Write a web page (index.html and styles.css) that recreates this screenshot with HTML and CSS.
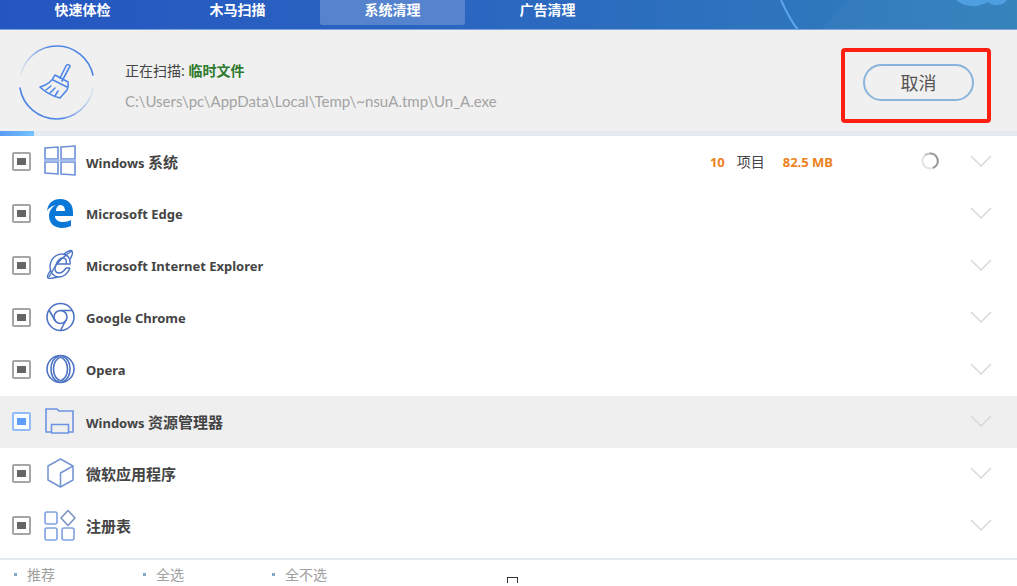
FILE: index.html
```html
<!DOCTYPE html>
<html lang="zh-CN">
<head>
  <meta charset="UTF-8" />
  <meta name="viewport" content="width=device-width, initial-scale=1.0" />
  <title>系统清理</title>
  <link rel="stylesheet" href="styles.css">
</head>
<body>
  <div class="app">
    <nav class="tabs">
      <svg class="tabs-art" viewBox="0 0 317 30" aria-hidden="true">
        <path d="M122 30Q138 8 150 0H317V30Z" fill="#fff" fill-opacity=".03"/>
        <path d="M81 0C86 11 91 22 99 31" fill="none" stroke="#5fa5ee" stroke-width="2"/>
        <path d="M256 0C262 5 270 7 277 6C282 5 286 3 288 2C293 7 303 6 307 0Z" fill="#4f9ee0"/>
      </svg>
      <button class="tab" type="button">快速体检</button>
      <button class="tab" type="button">木马扫描</button>
      <button class="tab active" type="button">系统清理</button>
      <button class="tab" type="button">广告清理</button>
    </nav>

    <header class="scan">
      <svg class="scan-icon" viewBox="0 0 76 76" fill="none" stroke="#4f86e6" stroke-width="1.6" stroke-linejoin="round" stroke-linecap="round" aria-hidden="true">
        <defs>
          <linearGradient id="arcTop" x1="0" x2="1"><stop offset="0" stop-color="#4f86e6" stop-opacity=".1"/><stop offset=".4" stop-color="#4f86e6"/></linearGradient>
          <linearGradient id="arcBottom" x1="1" x2="0"><stop offset="0" stop-color="#4f86e6" stop-opacity=".1"/><stop offset=".45" stop-color="#4f86e6"/></linearGradient>
        </defs>
        <path d="M2 30A37 37 0 0 1 74 31" stroke="url(#arcTop)"/>
        <path d="M1 44A37 37 0 0 0 74 44" stroke="url(#arcBottom)"/>
        <path d="M41 34L47 22Q49 19 51 22Q51 23 50 24L43 37"/>
        <path d="M36 31L49 38Q50 42 48 46L41 54Q29 51 21 43Q32 40 36 31Z"/>
        <path d="M34 36L48 43M27 46L32 42M31 49L36 44M36 52L39 47"/>
      </svg>
      <div class="scan-text">
        <p class="scan-status">正在扫描: <strong>临时文件</strong></p>
        <p class="scan-path">C:\Users\pc\AppData\Local\Temp\~nsuA.tmp\Un_A.exe</p>
      </div>
      <div class="highlight">
        <button class="cancel" type="button">取消</button>
      </div>
    </header>
    <div class="progress"><div class="progress-bar"></div></div>

    <ul class="list">
      <li class="row">
        <label class="item">
          <input type="checkbox" checked>
          <svg class="icon" viewBox="0 0 32 32" fill="none" stroke="#6b8fd8" stroke-width="1.6" aria-hidden="true">
            <path d="M1 3L14 2V14H1ZM17 2L31 1V14H17ZM1 17H14V29L1 28ZM17 17H31V30L17 29Z"/>
            <path d="M0 15.500H32" stroke="#a9c0ee" stroke-width="2"/>
          </svg>
          <span class="name">Windows <span class="cjk">系统</span></span>
        </label>
        <div class="stats"><b>10</b><span>项目</span><b>82.5 MB</b></div>
        <svg class="spinner" viewBox="0 0 18 18" fill="none" stroke-width="2" aria-hidden="true">
          <circle cx="9" cy="9" r="7.500" stroke="#e2e2e2"/>
          <path d="M4 3.500A7.500 7.500 0 0 1 9 1.500" stroke="#c4c4c4"/>
          <path d="M9 1.500A7.500 7.500 0 0 1 12 16" stroke="#969696"/>
        </svg>
        <button class="expand" type="button" aria-label="展开"><svg viewBox="0 0 22 12"><path d="M1 1L11 11L21 1"/></svg></button>
      </li>
      <li class="row">
        <label class="item">
          <input type="checkbox" checked>
          <svg class="icon" viewBox="0 0 32 32" fill="#0a78d7" aria-hidden="true">
            <path d="M3 14C4 6 9 2 16 2C25 2 29 8 29 15V19H11C11 23 15 25 19 25C22 25 25 24 27 23V29C24 30 21 31 18 31C10 31 5 26 5 19C5 14 8 10 12 8C7 9 4 12 3 14ZM12 14H21C21 10 19 8 16 8C14 8 12 11 12 14Z"/>
          </svg>
          <span class="name">Microsoft Edge</span>
        </label>
        <button class="expand" type="button" aria-label="展开"><svg viewBox="0 0 22 12"><path d="M1 1L11 11L21 1"/></svg></button>
      </li>
      <li class="row">
        <label class="item">
          <input type="checkbox" checked>
          <svg class="icon" viewBox="0 0 32 32" fill="none" stroke="#4d74c4" stroke-width="1.4" stroke-linejoin="round" aria-hidden="true">
            <path d="M26 19C24 24 20 28 15 28C10 28 6 24 6 18C6 10 12 5 18 5C23 5 27 9 26 15H13"/>
            <path d="M22 19C20 22 18 24 15 24C11 24 10 20 12 16C13 12 16 9 19 9C22 9 23 12 22 15"/>
            <path d="M22 19H26M20 5C24 2 27 1 28 2C29 4 28 7 26 10M7 21C4 25 3 28 4 29C6 30 10 29 14 28M5 28L12 16Q18 8 28 2"/>
          </svg>
          <span class="name">Microsoft Internet Explorer</span>
        </label>
        <button class="expand" type="button" aria-label="展开"><svg viewBox="0 0 22 12"><path d="M1 1L11 11L21 1"/></svg></button>
      </li>
      <li class="row">
        <label class="item">
          <input type="checkbox" checked>
          <svg class="icon" viewBox="0 0 32 32" fill="none" stroke="#4d74c4" stroke-width="1.6" aria-hidden="true">
            <circle cx="16.500" cy="16" r="13.500"/>
            <circle cx="16.500" cy="16" r="6.500"/>
            <path d="M16.500 9.500H28M11 19.500L5 9M22 19L16.500 29.500"/>
          </svg>
          <span class="name">Google Chrome</span>
        </label>
        <button class="expand" type="button" aria-label="展开"><svg viewBox="0 0 22 12"><path d="M1 1L11 11L21 1"/></svg></button>
      </li>
      <li class="row">
        <label class="item">
          <input type="checkbox" checked>
          <svg class="icon" viewBox="0 0 32 32" fill="none" stroke="#4d74c4" stroke-width="1.6" aria-hidden="true">
            <circle cx="16.500" cy="16" r="13.500"/>
            <path d="M16.500 4C12 6 9.500 11 9.500 16C9.500 21 12 26 16.500 28C21 26 23.500 21 23.500 16C23.500 11 21 6 16.500 4Z"/>
            <path d="M15 3C9 5 7 11 7 16C7 21 9 27 15 29M18 3C24 5 26 11 26 16C26 21 24 27 18 29"/>
          </svg>
          <span class="name">Opera</span>
        </label>
        <button class="expand" type="button" aria-label="展开"><svg viewBox="0 0 22 12"><path d="M1 1L11 11L21 1"/></svg></button>
      </li>
      <li class="row selected">
        <label class="item">
          <input type="checkbox" checked>
          <svg class="icon" viewBox="0 0 32 32" fill="none" stroke="#6d94e0" stroke-width="1.6" aria-hidden="true">
            <path d="M7 27H2V4H13L15 6H29V27H25"/>
            <path d="M7.500 19.500H24.500V28H7.500Z"/>
          </svg>
          <span class="name">Windows <span class="cjk">资源管理器</span></span>
        </label>
        <button class="expand" type="button" aria-label="展开"><svg viewBox="0 0 22 12"><path d="M1 1L11 11L21 1"/></svg></button>
      </li>
      <li class="row">
        <label class="item">
          <input type="checkbox" checked>
          <svg class="icon" viewBox="0 0 32 32" fill="none" stroke="#7697d4" stroke-width="1.6" stroke-linejoin="round" aria-hidden="true">
            <path d="M16.500 30L4 23V9L16.500 2L29 9V23L16.500 30V16L29 9"/>
          </svg>
          <span class="name"><span class="cjk">微软应用程序</span></span>
        </label>
        <button class="expand" type="button" aria-label="展开"><svg viewBox="0 0 22 12"><path d="M1 1L11 11L21 1"/></svg></button>
      </li>
      <li class="row">
        <label class="item">
          <input type="checkbox" checked>
          <svg class="icon" viewBox="0 0 32 32" fill="none" stroke="#7fa2e2" stroke-width="1.6" stroke-linejoin="round" aria-hidden="true">
            <rect x="1" y="3" width="12" height="12" rx="2"/>
            <rect x="1" y="19" width="12" height="12" rx="2"/>
            <rect x="18" y="19" width="12" height="12" rx="2"/>
            <path d="M24 1.500L31 9L24 16.500L17 9Z" stroke="#7c93c4"/>
          </svg>
          <span class="name"><span class="cjk">注册表</span></span>
        </label>
        <button class="expand" type="button" aria-label="展开"><svg viewBox="0 0 22 12"><path d="M1 1L11 11L21 1"/></svg></button>
      </li>
    </ul>

    <footer class="footer">
      <a href="#">推荐</a>
      <a href="#">全选</a>
      <a href="#">全不选</a>
      <span class="handle"></span>
    </footer>
  </div>
</body>
</html>
```
FILE: styles.css
```css
* { box-sizing: border-box; }
body {
  margin: 0;
  background: #fff;
  color: #444;
  font-family: "Noto Sans", "Noto Sans CJK SC", sans-serif;
  font-size: 14px;
}
button { font-family: inherit; padding: 0; border: none; background: none; cursor: pointer; }

/* Top tabs */
.tabs {
  position: relative;
  display: flex;
  align-items: flex-start;
  gap: 10px;
  height: 30px;
  padding-left: 10px;
  background: linear-gradient(90deg, #2555c1, #2b68c0 50%, #3080ba);
  border-bottom: 1px solid #7da5dc;
}
.tabs-art { position: absolute; top: 0; right: 0; width: 317px; height: 30px; }
.tab {
  width: 145px;
  height: 25px;
  padding-bottom: 5px;
  color: #fff;
  font-size: 14px;
  font-weight: bold;
  line-height: 20px;
  border-radius: 0 0 2px 2px;
}
.tab.active { background: #5583ce; }

/* Scan status */
.scan {
  display: flex;
  align-items: flex-start;
  padding: 14px 26px 8px 19px;
  background: #f0f0f0;
}
.scan-icon { width: 76px; height: 76px; }
.scan-text { flex: 1; padding: 17px 0 0 30px; }
.scan-text p { margin: 0; line-height: 20px; }
.scan-status strong { color: #2d7a2d; }
.scan-text .scan-path {
  margin-top: 10px;
  color: #a3a3a3;
  font-family: Lato, "Noto Sans", sans-serif;
  font-size: 15px;
}
.highlight {
  margin-top: 4px;
  padding: 12px 13px 18px 18px;
  border: 4px solid #ff1e12;
  border-radius: 4px;
}
.cancel {
  display: block;
  width: 111px;
  height: 37px;
  border: 2px solid #8ab4dc;
  border-radius: 19px;
  color: #555;
  font-size: 18px;
  line-height: 30px;
}

.progress { height: 5px; background: #e5e9f0; }
.progress-bar { width: 34px; height: 5px; background: linear-gradient(90deg, #5b9bf5, #74c2ff); }

/* Item list */
.list { margin: 0; padding: 0 0 6px; list-style: none; }
.row {
  display: flex;
  align-items: center;
  height: 52px;
  padding: 0 25px 0 12px;
}
.row.selected { background: #efefef; }
.item { flex: 1; display: flex; align-items: center; }
.name { font-size: 13px; font-weight: bold; line-height: 20px; }
.cjk { font-size: 15px; }
.item input {
  appearance: none;
  width: 19px;
  height: 19px;
  margin: 0 13px 2px 0;
  border: 2px solid #a5a5a5;
  border-radius: 2px;
  background: #fff;
}
.item input:checked { background: linear-gradient(#666, #666) center / 9px 7px no-repeat #fff; }
.selected .item input { border-color: #93bbf8; }
.selected .item input:checked { background: linear-gradient(#5f9dfa, #5f9dfa) center / 9px 7px no-repeat #f8fbff; }
.icon { width: 32px; height: 32px; margin: 0 10px 2px 0; }
.stats { display: flex; align-items: center; gap: 12px; line-height: 20px; }
.stats b { color: #ee8122; font-size: 13px; }
.stats b:last-child { margin-left: 6px; }
.spinner { width: 18px; height: 18px; margin: 0 31px 2px 88px; }
.expand { width: 22px; height: 12px; margin-bottom: 2px; }
.expand svg { display: block; width: 22px; height: 12px; fill: none; stroke: #d8d8d8; stroke-width: 1.5; }

/* Footer links */
.footer {
  position: relative;
  display: flex;
  padding-top: 5px;
  border-top: 2px solid #e4e9ee;
}
.footer a {
  width: 129px;
  padding-left: 14px;
  color: #a0a0a0;
  line-height: 20px;
  text-decoration: none;
}
.footer a::before {
  content: "";
  display: inline-block;
  width: 3px;
  height: 3px;
  margin-right: 10px;
  background: #85a9c6;
  vertical-align: 4px;
}
.handle {
  position: absolute;
  top: 17px;
  left: calc(50% - 2px);
  width: 11px;
  height: 6px;
  border: 1px solid #333;
  border-bottom: none;
}
```
